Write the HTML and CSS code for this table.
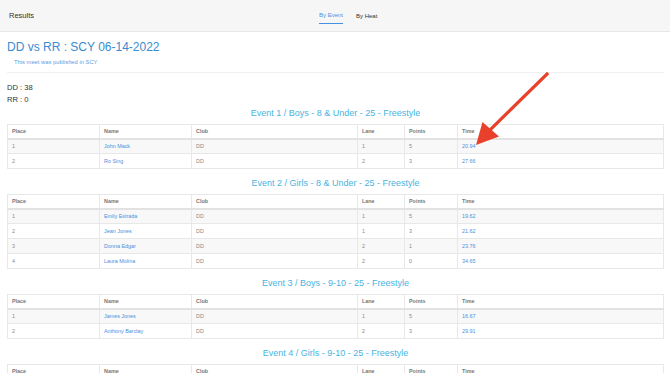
FILE: index.html
```html
<!DOCTYPE html>
<html>
<head>
<meta charset="utf-8">
<link rel="stylesheet" href="styles.css">
</head>
<body>
<header class="topbar">
  <div class="brand">Results</div>
  <nav class="tabs">
    <span class="tab active">By Event</span>
    <span class="tab">By Heat</span>
  </nav>
</header>
<main class="page">
  <section class="meet">
    <h1 class="meet-title">DD vs RR : SCY 06-14-2022</h1>
    <p class="meet-note">This meet was published in SCY</p>
  </section>
  <section class="scores">
    <div>DD : 38</div>
    <div>RR : 0</div>
  </section>

  <h2 class="event-title">Event 1 / Boys - 8 &amp; Under - 25 - Freestyle</h2>
  <table class="results">
    <thead><tr><th class="c-place">Place</th><th class="c-name">Name</th><th class="c-club">Club</th><th class="c-lane">Lane</th><th class="c-pts">Points</th><th>Time</th></tr></thead>
    <tbody>
      <tr><td>1</td><td><a>John Mack</a></td><td>DD</td><td>1</td><td>5</td><td><a>20.94</a></td></tr>
      <tr><td>2</td><td><a>Ro Sing</a></td><td>DD</td><td>2</td><td>3</td><td><a>27.66</a></td></tr>
    </tbody>
  </table>

  <h2 class="event-title">Event 2 / Girls - 8 &amp; Under - 25 - Freestyle</h2>
  <table class="results">
    <thead><tr><th class="c-place">Place</th><th class="c-name">Name</th><th class="c-club">Club</th><th class="c-lane">Lane</th><th class="c-pts">Points</th><th>Time</th></tr></thead>
    <tbody>
      <tr><td>1</td><td><a>Emily Estrada</a></td><td>DD</td><td>1</td><td>5</td><td><a>19.62</a></td></tr>
      <tr><td>2</td><td><a>Jean Jones</a></td><td>DD</td><td>1</td><td>3</td><td><a>21.62</a></td></tr>
      <tr><td>3</td><td><a>Donna Edgar</a></td><td>DD</td><td>2</td><td>1</td><td><a>23.76</a></td></tr>
      <tr><td>4</td><td><a>Laura Molina</a></td><td>DD</td><td>2</td><td>0</td><td><a>34.65</a></td></tr>
    </tbody>
  </table>

  <h2 class="event-title">Event 3 / Boys - 9-10 - 25 - Freestyle</h2>
  <table class="results">
    <thead><tr><th class="c-place">Place</th><th class="c-name">Name</th><th class="c-club">Club</th><th class="c-lane">Lane</th><th class="c-pts">Points</th><th>Time</th></tr></thead>
    <tbody>
      <tr><td>1</td><td><a>James Jones</a></td><td>DD</td><td>1</td><td>5</td><td><a>16.67</a></td></tr>
      <tr><td>2</td><td><a>Anthony Barclay</a></td><td>DD</td><td>2</td><td>3</td><td><a>29.91</a></td></tr>
    </tbody>
  </table>

  <h2 class="event-title">Event 4 / Girls - 9-10 - 25 - Freestyle</h2>
  <table class="results">
    <thead><tr><th class="c-place">Place</th><th class="c-name">Name</th><th class="c-club">Club</th><th class="c-lane">Lane</th><th class="c-pts">Points</th><th>Time</th></tr></thead>
  </table>
</main>
<svg class="arrow" width="90" height="90" viewBox="0 0 90 90" aria-hidden="true">
  <line x1="77" y1="6" x2="20" y2="62" stroke="#e8402a" stroke-width="3.2" stroke-linecap="square"/>
  <polygon points="6,77 12.5,54 29,68.5" fill="#e8402a"/>
</svg>
</body>
</html>
```
FILE: styles.css
```css
* { box-sizing: border-box; }
html, body { margin: 0; padding: 0; }
body {
  font-family: "Liberation Sans", Arial, sans-serif;
  background: #fff;
  color: #333;
  width: 670px;
  height: 373px;
  overflow: hidden;
  position: relative;
}
.topbar {
  height: 32px;
  background: #f6f6f6;
  border-bottom: 1px solid #e6e6e6;
  display: flex;
  align-items: center;
  position: relative;
}
.brand {
  font-size: 7.5px;
  color: #333;
  padding-left: 9px;
  margin-top: -1px;
}
.tabs {
  position: absolute;
  left: 319px;
  top: 0;
  height: 32px;
  display: flex;
  gap: 13px;
}
.tab {
  font-size: 6px;
  color: #333;
  height: 24px;
  display: flex;
  align-items: flex-end;
  padding-bottom: 5px;
}
.tab.active {
  color: #4a90e2;
  border-bottom: 1px solid #4a90e2;
}
.page {
  padding: 0 6px 0 7px;
}
.meet {
  border-bottom: 1px solid #eef0f2;
  padding: 7px 0 6px 0;
}
.meet-title {
  margin: 0;
  font-size: 12px;
  font-weight: normal;
  color: #3a8bd0;
  line-height: 16px;
}
.meet-note {
  margin: 3px 0 0 7px;
  font-size: 5.8px;
  color: #5aa0e6;
  line-height: 8px;
}
.scores {
  padding-top: 9px;
  font-size: 7.6px;
  color: #333;
  line-height: 12px;
}
.event-title {
  margin: 0;
  text-align: center;
  font-size: 9px;
  font-weight: normal;
  color: #48b4e2;
  line-height: 12px;
  padding: 1px 0 5px 0;
}
.results + .event-title { padding-top: 8px; }
.results {
  width: 100%;
  border-collapse: collapse;
  border: 1px solid #e8e8e8;
  font-size: 5.4px;
  table-layout: fixed;
}
.results th, .results td {
  text-align: left;
  padding: 0 4px;
  height: 15px;
  border: 1px solid #e8e8e8;
  color: #8a8a8a;
  font-weight: normal;
}
.results th {
  height: 14px;
  color: #777;
  font-weight: bold;
  border-bottom: 2px solid #e2e2e2;
}
.results tbody tr:nth-child(odd) td { background: #f8f8f8; }
.results a { color: #4a90e2; }
.c-place { width: 92px; }
.c-name { width: 92px; }
.c-club { width: 166px; }
.c-lane { width: 47px; }
.c-pts { width: 53px; }
.arrow {
  position: absolute;
  left: 470px;
  top: 68px;
}
```
